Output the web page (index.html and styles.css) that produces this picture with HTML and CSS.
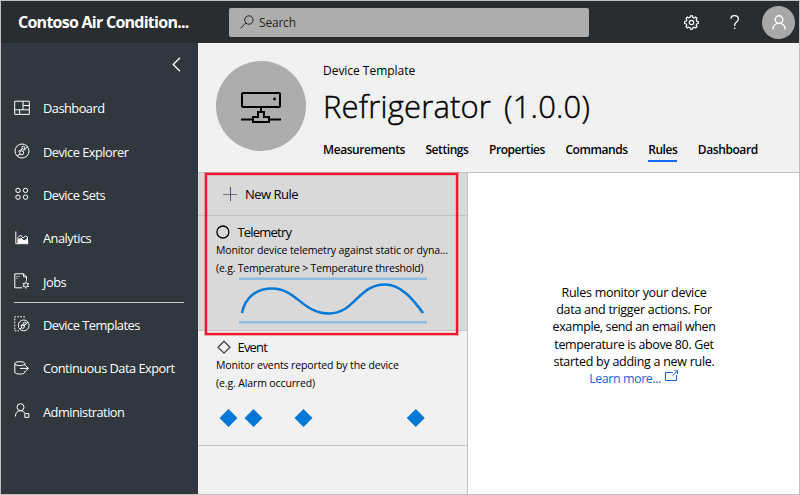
FILE: index.html
```html
<!DOCTYPE html>
<html lang="en">
<head>
<meta charset="utf-8">
<title>Refrigerator rules</title>
<link rel="stylesheet" href="styles.css">
</head>
<body>
<div class="app">
  <header class="topbar">
    <div class="brand"><span>Contoso Air Condition...</span></div>
    <div class="search">
      <svg width="14" height="14" viewBox="0 0 14 14"><circle cx="8.9" cy="5" r="4.2"/><path d="M5.8 8 .5 13.3"/></svg>
      <span>Search</span>
    </div>
    <div class="tools">
      <svg class="gear" width="15" height="15" viewBox="0 0 15 15"><circle cx="7.5" cy="7.5" r="2.2"/><path d="M6.5.8h2l.4 1.7 1.3.5 1.5-.9 1.3 1.4-.8 1.4.5 1.3 1.6.4v1.9l-1.6.4-.6 1.3.9 1.4-1.4 1.4-1.4-.9-1.3.6-.4 1.5h-2l-.4-1.6-1.3-.5-1.5.9L2 11.600l.8-1.4-.5-1.300L.7 8.500v-2l1.600-.4.5-1.300L2 3.400 3.400 2l1.400.9 1.300-.5z"/></svg>
      <svg class="help" width="10" height="15" viewBox="0 0 10 15"><path d="M.8 3.600C1 1.700 2.500.7 4.500.7c2.300 0 3.900 1.200 3.900 3.200 0 2.800-3.700 3.400-3.700 6v1M4.700 12.600v1.400"/></svg>
      <div class="avatar"><svg width="14" height="15" viewBox="0 0 14 15"><circle cx="7" cy="4.600" r="3.800"/><path d="M1 14.500c0-3.800 2.500-6.100 6-6.100s6 2.300 6 6.100"/></svg></div>
    </div>
  </header>
  <div class="body">
    <nav class="sidebar">
      <div class="collapse"><svg width="9" height="15" viewBox="0 0 9 15"><path d="M8 .7 1.200 7.500 8 14.300"/></svg></div>
      <a class="item"><svg width="16" height="16" viewBox="0 0 16 16"><path d="M.7 1.200h14.600v13.200H.7zM9 1.200v8.600M.7 9.800h14.600M9 5.500h6.300M5.600 9.800v4.600"/></svg><span>Dashboard</span></a>
      <a class="item"><svg width="16" height="16" viewBox="0 0 16 16"><circle cx="8" cy="8" r="7"/><circle cx="9.300" cy="4.700" r="1.500"/><circle cx="7.600" cy="9.800" r="2"/><path d="M3 13 6.200 11M9 8.500l4.700-5M8.300 6l-4 2.400"/></svg><span>Device Explorer</span></a>
      <a class="item"><svg width="16" height="16" viewBox="0 0 16 16"><circle cx="4" cy="4.400" r="2.200"/><circle cx="11.500" cy="4.400" r="2.200"/><circle cx="4" cy="11.200" r="2.200"/><circle cx="11.500" cy="11.200" r="2.200"/></svg><span>Device Sets</span></a>
      <a class="item"><svg width="16" height="16" viewBox="0 0 16 16"><path d="M1.800 1.500v12.200h12.400M4 12V7.500L6.500 5 9 8l2.500-2 2 1v5M4 10l3-2 3 3 3.500-2.500"/><path class="solid" d="M4 10.500 7 9l3 2.200 3.700-1.200v3H4z"/></svg><span>Analytics</span></a>
      <a class="item"><svg width="16" height="16" viewBox="0 0 16 16"><path d="M8 14.800H.8V.8h8.700l3 3v4M9.500.8v3h3"/><path d="M2.500 3.500h4M2.500 5.500h1" stroke-dasharray="1 1"/><circle cx="11.800" cy="12" r="2.100"/><path d="M11.800 8.500v1.400M11.800 14.100v1.500M8.700 10.200l1.300.8M13.600 13l1.400.8M8.700 13.800l1.300-.8M13.600 11l1.400-.8"/></svg><span>Jobs</span></a>
      <div class="rule"></div>
      <a class="item"><svg width="16" height="16" viewBox="0 0 16 16"><path d="M11 .8H.8v14H5" stroke-dasharray="1.800 1.200"/><circle cx="9.700" cy="9.400" r="5.400"/><circle cx="10.800" cy="7.400" r="1.300"/><circle cx="8.800" cy="10.800" r="1.500"/><path d="M6 13l1.600-1.200M10.200 10l3.600-3.800M9.500 8l-3 1.800"/></svg><span>Device Templates</span></a>
      <a class="item"><svg width="16" height="16" viewBox="0 0 16 16"><ellipse cx="5.800" cy="3.600" rx="5" ry="2"/><path d="M.8 3.600v8.600c0 2.500 10 2.500 10 0v-1M10.800 3.600v2M6 8.400h8.400M11.400 5.500l3 2.900-3 2.900"/></svg><span>Continuous Data Export</span></a>
      <a class="item"><svg width="16" height="16" viewBox="0 0 16 16"><circle cx="6.500" cy="4.200" r="3.500"/><path d="M1.300 13.500c.1-3.500 2-5.800 5.200-5.800 1.800 0 3.200.8 4.200 2.300M10.800 10.600h4v3.800h-4z"/></svg><span>Administration</span></a>
    </nav>
    <main class="main">
      <section class="head">
        <div class="device"><svg width="42" height="34" viewBox="0 0 42 34"><rect x="2" y="2" width="38" height="14" rx="1"/><path d="M21 16v5M18 21h6v5h5v5H13v-5h5zM1 28.500h12M29 28.500h12"/><circle class="dot" cx="34.500" cy="8" r="1.400"/></svg></div>
        <div class="info">
          <div class="kind"><span>Device Template</span></div>
          <h1><span class="name">Refrigerator</span><span class="version">(1.0.0)</span></h1>
          <div class="tabs">
            <a>Measurements</a><a>Settings</a><a>Properties</a><a>Commands</a><a class="active">Rules</a><a>Dashboard</a>
          </div>
        </div>
      </section>
      <div class="content">
        <section class="rules">
          <div class="new"><svg width="14" height="14" viewBox="0 0 14 14"><path class="h" d="M0 7.500h14"/><path class="v" d="M7.500 0v14"/></svg><span>New Rule</span></div>
          <div class="card telemetry">
            <div class="title"><svg width="16" height="16" viewBox="0 0 16 16"><circle cx="6.900" cy="8" r="6"/></svg><span>Telemetry</span></div>
            <p class="d1">Monitor device telemetry against static or dyna...</p>
            <p class="d2">(e.g. Temperature &gt; Temperature threshold)</p>
            <svg class="wave" width="188" height="47" viewBox="0 0 188 47"><path class="limit" d="M0 1.700h188M0 45.300h188"/><path class="line" d="M3 36C6 20 18 11.500 33 11.500c25 0 30 25 57 25 26 0 29-29 56-29 15 0 27 13 38 28.500"/></svg>
          </div>
          <div class="card event">
            <div class="title"><svg width="16" height="16" viewBox="0 0 16 16"><path d="M8 2.200 14 8.200 8 14.200 2 8.200z"/></svg><span>Event</span></div>
            <p class="d3">Monitor events reported by the device</p>
            <p class="d4">(e.g. Alarm occurred)</p>
            <svg class="marks" width="210" height="20" viewBox="0 0 210 20"><path d="m12.500 1 9 9-9 9-9-9zM37.500 1l9 9-9 9-9-9zM87.500 1l9 9-9 9-9-9zM199.800 1l9 9-9 9-9-9z"/></svg>
          </div>
          <div class="highlight"></div>
        </section>
        <section class="empty">
          <div class="l1">Rules monitor your device</div>
          <div class="l2">data and trigger actions. For</div>
          <div class="l3">example, send an email when</div>
          <div class="l4">temperature is above 80. Get</div>
          <div class="l5">started by adding a new rule.</div>
          <a class="more"><span>Learn more...</span><svg width="14" height="12" viewBox="0 0 14 12"><path d="M8 2.500H.5v8h11V5M7.500 5.500l5-4.500M9.500.8h3v3"/></svg></a>
        </section>
      </div>
    </main>
  </div>
</div>
</body>
</html>
```
FILE: styles.css
```css
* { box-sizing: border-box; }
body { margin: 0; font-family: "Open Sans", sans-serif; font-size: 13px; color: #000; }
svg { fill: none; stroke: currentColor; flex: none; display: block; }
h1, p { margin: 0; font-weight: 400; }
.app { width: 800px; height: 495px; border: 1px solid #bfc1c1; display: flex; flex-direction: column; overflow: hidden; white-space: nowrap; }
.topbar { height: 42px; background: #292d2f; color: #fff; display: flex; align-items: center; flex: none; }
.brand { width: 228px; padding-left: 17px; font-size: 16px; font-weight: 700; letter-spacing: -0.74px; }
.search { width: 360px; height: 29px; background: #adadad; color: #222; border-radius: 2px; display: flex; align-items: center; gap: 5px; padding-left: 11px; font-size: 12px; letter-spacing: -0.2px; }
.tools { flex: 1; display: flex; align-items: center; }
.gear { margin-left: 95px; stroke-width: 1.2; }
.help { margin-left: 31px; stroke-width: 1.3; }
.avatar { width: 33px; height: 33px; margin-left: 22px; border-radius: 50%; background: #a8a8a8; display: flex; align-items: center; justify-content: center; }
.avatar svg { stroke-width: 1.4; }
.body { flex: 1; display: flex; min-height: 0; }
.sidebar { width: 197px; background: #30373e; color: #fff; padding: 14px 14px 0 13px; flex: none; }
.collapse { height: 29.500px; padding-left: 158px; }
.collapse svg { stroke-width: 1.300; }
.item { height: 43.350px; display: flex; align-items: center; gap: 13px; font-size: 12.800px; letter-spacing: -0.5px; }
.item svg { margin-top: -1px; }
.solid { fill: currentColor; }
.rule { height: 1px; background: #c5cbc9; margin: -1px 0 0 0; }
.main { flex: 1; display: flex; flex-direction: column; background: #f1f1f1; }
.head { height: 130px; border-bottom: 1px solid #c3c3c3; display: flex; padding: 18px 0 0 18px; flex: none; }
.device { width: 90px; height: 90px; border-radius: 50%; background: #adadad; display: flex; align-items: center; justify-content: center; padding-top: 3px; }
.device svg { stroke-width: 2; }
.dot { fill: #000; stroke: none; }
.info { margin-left: 17px; }
.kind { font-size: 12px; line-height: 19px; height: 18px; letter-spacing: -0.03px; }
h1 { height: 54px; line-height: 54px; font-size: 31px; font-weight: 300; display: flex; letter-spacing: 0.17px; -webkit-text-stroke: 0.4px #000; }
.version { margin-left: 13px; }
.tabs { display: flex; gap: 20.400px; font-weight: 600; font-size: 12px; letter-spacing: -0.42px; }
.tabs a { height: 29px; line-height: 34px; }
.tabs .active { border-bottom: 2px solid #136bfb; }
.content { flex: 1; display: flex; }
.rules { width: 270px; border-right: 1px solid #c3c3c3; position: relative; }
.new { height: 43px; background: #d9d9d9; border-bottom: 1px solid #c3c3c3; display: flex; align-items: center; gap: 8px; padding-left: 25px; letter-spacing: -0.5px; }
.new .h { stroke: #777; } .new .v { stroke: #505080; }
.card { border-bottom: 1px solid #c3c3c3; padding: 7px 0 0 18px; height: 115px; }
.telemetry { background: #d9d9d9; }
.title { display: flex; align-items: center; height: 18px; gap: 5.500px; letter-spacing: -0.8px; }
.title svg { stroke-width: 1.3; }
.event .title svg { stroke: #444; }
.card p { font-size: 10.500px; line-height: 18px; height: 18px; letter-spacing: -0.12px; }
.card .d2 { letter-spacing: -0.2px; }
.wave { margin: 0 0 0 23px; }
.limit { stroke: #90bce0; stroke-width: 2.600; }
.line { stroke: #0078d7; stroke-width: 2.500; }
.marks { margin-top: 16px; fill: #0078d7; stroke: none; }
.highlight { position: absolute; left: 7px; top: 0; width: 253px; height: 162px; border: 2px solid #f01830; box-shadow: 0 0 0 1px #f0183050, inset 0 0 0 1px #f0183030; }
.empty { flex: 1; background: #fff; text-align: center; padding: 111px 0 0 1px; font-size: 12.500px; line-height: 17.200px; letter-spacing: -0.28px; }
.l3, .l4 { letter-spacing: -0.37px; }
.more { color: #1b62d1; display: flex; justify-content: center; gap: 4px; line-height: 17px; letter-spacing: -0.45px; }
```
